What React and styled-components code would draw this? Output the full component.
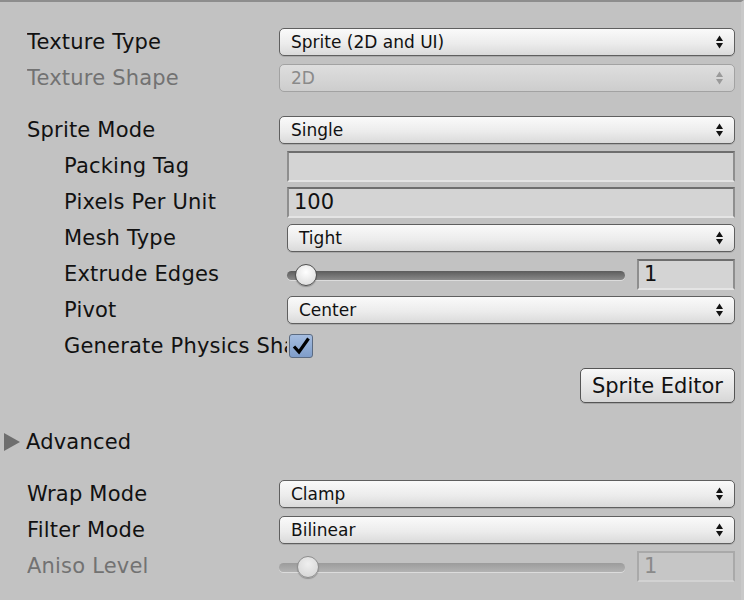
import React from "react";
import styled, { createGlobalStyle, css } from "styled-components";

const GlobalStyle = createGlobalStyle`
  html, body { margin: 0; padding: 0; background: #c2c2c2; }
  body { font-family: "DejaVu Sans", Verdana, sans-serif; }
  * { box-sizing: border-box; }
`;

const Inspector = styled.div`
  width: 744px;
  height: 600px;
  overflow: hidden;
  background: #c2c2c2;
  border-top: 2px solid #8d8d8d;
  border-right: 3px solid #c9c9c9;
  padding: 22px 6px 0 27px;
  color: #111;
`;

const Row = styled.div`
  display: grid;
  grid-template-columns: ${(p) => (p.$indent ? "223px 1fr" : "252px 1fr")};
  padding-left: ${(p) => (p.$indent ? "37px" : "0")};
  height: 36px;
  align-items: center;
`;

const Label = styled.div`
  font-size: 21px;
  white-space: nowrap;
  overflow: hidden;
  letter-spacing: 0.2px;
  color: ${(p) => (p.$disabled ? "#727272" : "#111")};
`;

const Spacer = styled.div`
  height: ${(p) => p.$h}px;
`;

const DropdownBox = styled.div`
  height: 28px;
  border-radius: 5px;
  border: 1px solid ${(p) => (p.$disabled ? "#a2a2a2" : "#5f5f5f")};
  background: ${(p) =>
    p.$disabled
      ? "linear-gradient(#dedede, #d4d4d4 60%, #cdcdcd)"
      : "linear-gradient(#fafafa, #ececec 55%, #dadada)"};
  box-shadow: ${(p) => (p.$disabled ? "none" : "0 1px 0 rgba(0,0,0,0.12)")};
  display: flex;
  align-items: center;
  justify-content: space-between;
  padding: 0 11px 0 11px;
  font-size: 17px;
  color: ${(p) => (p.$disabled ? "#8a8a8a" : "#111")};
`;

const Arrows = ({ disabled }) => (
  <svg width="7" height="14" viewBox="0 0 7 14">
    <polygon points="0,6 3.5,0.5 7,6" fill={disabled ? "#9a9a9a" : "#111"} />
    <polygon points="0,8 3.5,13.5 7,8" fill={disabled ? "#9a9a9a" : "#111"} />
  </svg>
);

const Dropdown = ({ value, disabled }) => (
  <DropdownBox $disabled={disabled}>
    <span>{value}</span>
    <Arrows disabled={disabled} />
  </DropdownBox>
);

const fieldBase = css`
  height: 31px;
  border: 2px solid #8e8e8e;
  border-top-color: #6e6e6e;
  border-bottom-color: #e4e4e4;
  background: #d4d4d4;
  font-size: 21px;
  display: flex;
  align-items: center;
  padding: 0 5px;
`;

const TextField = styled.div`
  ${fieldBase}
`;

const NumberField = styled.div`
  ${fieldBase}
  width: 98px;
  flex: none;
  ${(p) =>
    p.$disabled &&
    css`
      background: #c6c6c6;
      border-color: #a9a9a9;
      border-bottom-color: #d2d2d2;
      color: #8a8a8a;
    `}
`;

const SliderWrap = styled.div`
  display: flex;
  align-items: center;
  gap: 12px;
`;

const Track = styled.div`
  position: relative;
  flex: 1;
  height: 9px;
  margin-top: 3px;
  border-radius: 5px;
  background: ${(p) =>
    p.$disabled
      ? "linear-gradient(#9c9c9c, #b2b2b2)"
      : "linear-gradient(#5c5c5c, #8a8a8a)"};
  box-shadow: 0 1px 0 #dcdcdc;
`;

const Knob = styled.div`
  position: absolute;
  top: 50%;
  width: 22px;
  height: 22px;
  margin-top: -12px;
  border-radius: 50%;
  border: 1.5px solid ${(p) => (p.$disabled ? "#8e8e8e" : "#505050")};
  background: ${(p) =>
    p.$disabled
      ? "radial-gradient(circle at 50% 35%, #efefef, #d2d2d2)"
      : "radial-gradient(circle at 50% 35%, #ffffff, #d6d6d6)"};
  box-shadow: 0 1px 1px rgba(0, 0, 0, 0.25);
`;

const Slider = ({ value, min, max, disabled }) => {
  const frac = (value - min) / (max - min);
  return (
    <SliderWrap>
      <Track $disabled={disabled}>
        <Knob
          $disabled={disabled}
          style={{ left: `calc(${frac} * (100% - 26px) - 2px)` }}
        />
      </Track>
      <NumberField $disabled={disabled}>{value}</NumberField>
    </SliderWrap>
  );
};

const CheckBox = styled.div`
  width: 24px;
  height: 24px;
  margin-left: 2px;
  border-radius: 3px;
  border: 1px solid #5b6b82;
  background: linear-gradient(#a5bde0, #7f9dc9);
  display: flex;
  align-items: center;
  justify-content: center;
`;

const ButtonRow = styled.div`
  display: flex;
  justify-content: flex-end;
  padding-top: 4px;
`;

const Button = styled.div`
  height: 35px;
  padding: 0 11px;
  border: 1px solid #555;
  border-radius: 5px;
  background: linear-gradient(#f8f8f8, #e6e6e6 55%, #d6d6d6);
  box-shadow: 0 1px 0 rgba(0, 0, 0, 0.15);
  font-size: 21px;
  display: flex;
  align-items: center;
`;

const Foldout = styled.div`
  display: flex;
  align-items: center;
  gap: 6px;
  height: 36px;
  margin-top: 21px;
  margin-left: -23px;
  font-size: 21px;
  letter-spacing: 0.2px;
`;

const Triangle = styled.div`
  width: 0;
  height: 0;
  border-top: 9px solid transparent;
  border-bottom: 9px solid transparent;
  border-left: 16px solid #6e6e6e;
`;

export default function App() {
  return (
    <>
      <GlobalStyle />
      <Inspector>
        <Row>
          <Label>Texture Type</Label>
          <Dropdown value="Sprite (2D and UI)" />
        </Row>
        <Row>
          <Label $disabled>Texture Shape</Label>
          <Dropdown value="2D" disabled />
        </Row>
        <Spacer $h={16} />
        <Row>
          <Label>Sprite Mode</Label>
          <Dropdown value="Single" />
        </Row>
        <Row $indent>
          <Label>Packing Tag</Label>
          <TextField />
        </Row>
        <Row $indent>
          <Label>Pixels Per Unit</Label>
          <TextField>100</TextField>
        </Row>
        <Row $indent>
          <Label>Mesh Type</Label>
          <Dropdown value="Tight" />
        </Row>
        <Row $indent>
          <Label>Extrude Edges</Label>
          <Slider value={1} min={0} max={32} />
        </Row>
        <Row $indent>
          <Label>Pivot</Label>
          <Dropdown value="Center" />
        </Row>
        <Row $indent>
          <Label>Generate Physics Shape</Label>
          <CheckBox>
            <svg width="20" height="20" viewBox="0 0 20 20">
              <path
                d="M3 10.5 L8 16 L17.5 2.5"
                fill="none"
                stroke="#000"
                strokeWidth="3.2"
                strokeLinejoin="miter"
              />
            </svg>
          </CheckBox>
        </Row>
        <ButtonRow>
          <Button>Sprite Editor</Button>
        </ButtonRow>
        <Foldout>
          <Triangle />
          <span>Advanced</span>
        </Foldout>
        <Spacer $h={16} />
        <Row>
          <Label>Wrap Mode</Label>
          <Dropdown value="Clamp" />
        </Row>
        <Row>
          <Label>Filter Mode</Label>
          <Dropdown value="Bilinear" />
        </Row>
        <Row>
          <Label $disabled>Aniso Level</Label>
          <Slider value={1} min={0} max={16} disabled />
        </Row>
      </Inspector>
    </>
  );
}
